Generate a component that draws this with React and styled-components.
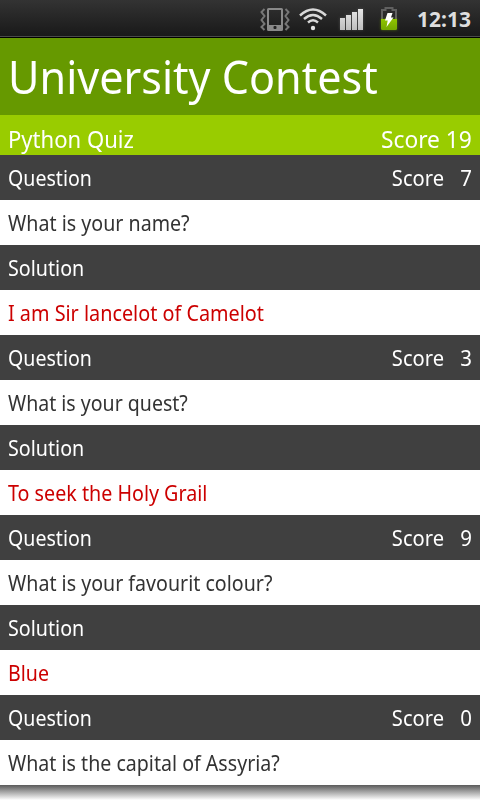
import React from "react";
import styled, { createGlobalStyle } from "styled-components";

const GlobalStyle = createGlobalStyle`
  * { box-sizing: border-box; }
  html, body { margin: 0; background: #fff; overflow: hidden; }
  body { font-family: "Noto Sans", "Open Sans", sans-serif; }
`;

const Screen = styled.main`
  width: 480px;
  height: 800px;
  display: flex;
  flex-direction: column;
  overflow: hidden;
  background: #fff;
`;

const StatusBar = styled.header`
  height: 38px;
  flex: none;
  display: flex;
  justify-content: flex-end;
  background: linear-gradient(#333 0, #1a1a1a 35px, #1a1a1a 36px, #4a4a4a 36px, #4a4a4a 37px, #000 37px);
`;

const StatusIcons = styled.svg`
  display: block;
  width: 150px;
  height: 36px;
`;

const Clock = styled.time`
  width: 75px;
  padding-left: 12px;
  color: #dedede;
  font-size: 21px;
  font-weight: 700;
  line-height: 39px;
  white-space: nowrap;
`;

const Label = styled.span`
  display: block;
  white-space: pre;
  transform: scaleX(${(p) => p.$fit || 1});
  transform-origin: ${(p) => (p.$end ? "right" : "left")} center;
`;

const TitleBar = styled.h1`
  flex: none;
  height: 77px;
  margin: 0;
  padding: 0 8px;
  background: #690;
  color: #fff;
  font-size: 46px;
  font-weight: 400;
  line-height: 76px;
`;

const QuizBar = styled.section`
  flex: none;
  height: 40px;
  display: flex;
  justify-content: space-between;
  padding: 0 8px;
  background: #9c0;
  color: #fff;
  font-size: 24px;
  line-height: 47px;
  overflow: hidden;
`;

const HeadingRow = styled.div`
  flex: none;
  height: 45px;
  display: flex;
  justify-content: space-between;
  padding: 0 8px;
  background: #404040;
  color: #fff;
  font-size: 22px;
  line-height: 44px;
`;

const ScoreGroup = styled.div`
  display: flex;
`;

const Points = styled.span`
  width: 28px;
  text-align: right;
  transform: scaleX(0.93);
  transform-origin: right center;
`;

const TextRow = styled.div`
  flex: none;
  height: 45px;
  padding: 0 8px;
  background: #fff;
  color: ${(p) => (p.$answer ? "#c00" : "#333")};
  font-size: 22px;
  line-height: 44px;
`;

const Shadow = styled.div`
  flex: none;
  height: 15px;
  background: linear-gradient(#5a5a5a, #fff);
`;

const entries = [
  { score: 7, question: "What is your name?", qFit: 0.893, answer: "I am Sir lancelot of Camelot", aFit: 0.9 },
  { score: 3, question: "What is your quest?", qFit: 0.888, answer: "To seek the Holy Grail", aFit: 0.895 },
  { score: 9, question: "What is your favourit colour?", qFit: 0.892, answer: "Blue", aFit: 0.89 },
  { score: 0, question: "What is the capital of Assyria?", qFit: 0.891 },
];

function Icons() {
  return (
    <StatusIcons viewBox="255 0 150 36" aria-hidden="true">
      <defs>
        <linearGradient id="bars" x1="0" y1="0" x2="0" y2="1">
          <stop offset="0" stopColor="#e6e6e6" />
          <stop offset="1" stopColor="#bdbdbd" />
        </linearGradient>
        <linearGradient id="charge" x1="0" y1="0" x2="0" y2="1">
          <stop offset="0" stopColor="#8fc400" />
          <stop offset="1" stopColor="#74a800" />
        </linearGradient>
        <filter id="glow" x="-30%" y="-30%" width="160%" height="160%">
          <feGaussianBlur stdDeviation="1.5" />
        </filter>
      </defs>
      <g fill="none" stroke="#8a8a8a">
        <rect x="268" y="9" width="14" height="21" rx="0.5" strokeWidth="2" />
        <path d="M264.500 9l-3 3 3 4-3 4 3 4-3 3 3 3M285.500 9l3 3-3 4 3 4-3 4 3 3-3 3" strokeWidth="2" stroke="#777" />
      </g>
      <path d="M268 25h14v5h-14z" fill="#8a8a8a" />
      <rect x="273.500" y="26" width="3" height="3" rx="1" fill="#222" />
      <g fill="none" stroke="#d8d8d8" strokeWidth="2.4">
        <path d="M300 15.500Q313 3.500 326 15.500" />
        <path d="M304 19Q313 10.800 322 19" />
        <path d="M308 22.500Q313 18 318 22.500" />
      </g>
      <circle cx="313" cy="28" r="2.200" fill="#e2e2e2" />
      <path d="M340 18h5v12h-5zM346 15h5v15h-5zM352 12h5v18h-5zM358 9h5v21h-5z" fill="#999" opacity="0.35" filter="url(#glow)" />
      <path d="M340 18h5v12h-5zM346 15h5v15h-5zM352 12h5v18h-5zM358 9h5v21h-5z" fill="url(#bars)" />
      <path d="M382 19v-9h3.500V8h7v2h3.500v9" fill="none" stroke="#606060" strokeWidth="2" />
      <path d="M381 19h16v11h-16z" fill="#79ad00" opacity="0.5" filter="url(#glow)" />
      <path d="M381 19h16v9.500q0 1.500-1.500 1.500h-13q-1.500 0-1.500-1.500z" fill="url(#charge)" />
      <path d="M387.500 13h5l-1.500 4.500h2.500l-7 9.500 1.200-6.500h-2.700z" fill="#fff" />
    </StatusIcons>
  );
}

export default function App() {
  return (
    <>
      <GlobalStyle />
      <Screen>
        <StatusBar>
          <Icons />
          <Clock>12:13</Clock>
        </StatusBar>
        <TitleBar>
          <Label $fit={0.937}>University Contest</Label>
        </TitleBar>
        <QuizBar>
          <Label $fit={0.92}>Python Quiz</Label>
          <Label $end $fit={0.948}>Score 19</Label>
        </QuizBar>
        {entries.map((e) => (
          <React.Fragment key={e.question}>
            <HeadingRow>
              <Label $fit={0.89}>Question</Label>
              <ScoreGroup>
                <Label $end $fit={0.915}>Score</Label>
                <Points>{e.score}</Points>
              </ScoreGroup>
            </HeadingRow>
            <TextRow>
              <Label $fit={e.qFit}>{e.question}</Label>
            </TextRow>
            {e.answer && (
              <>
                <HeadingRow>
                  <Label $fit={0.895}>Solution</Label>
                </HeadingRow>
                <TextRow $answer>
                  <Label $fit={e.aFit}>{e.answer}</Label>
                </TextRow>
              </>
            )}
          </React.Fragment>
        ))}
        <Shadow />
      </Screen>
    </>
  );
}
